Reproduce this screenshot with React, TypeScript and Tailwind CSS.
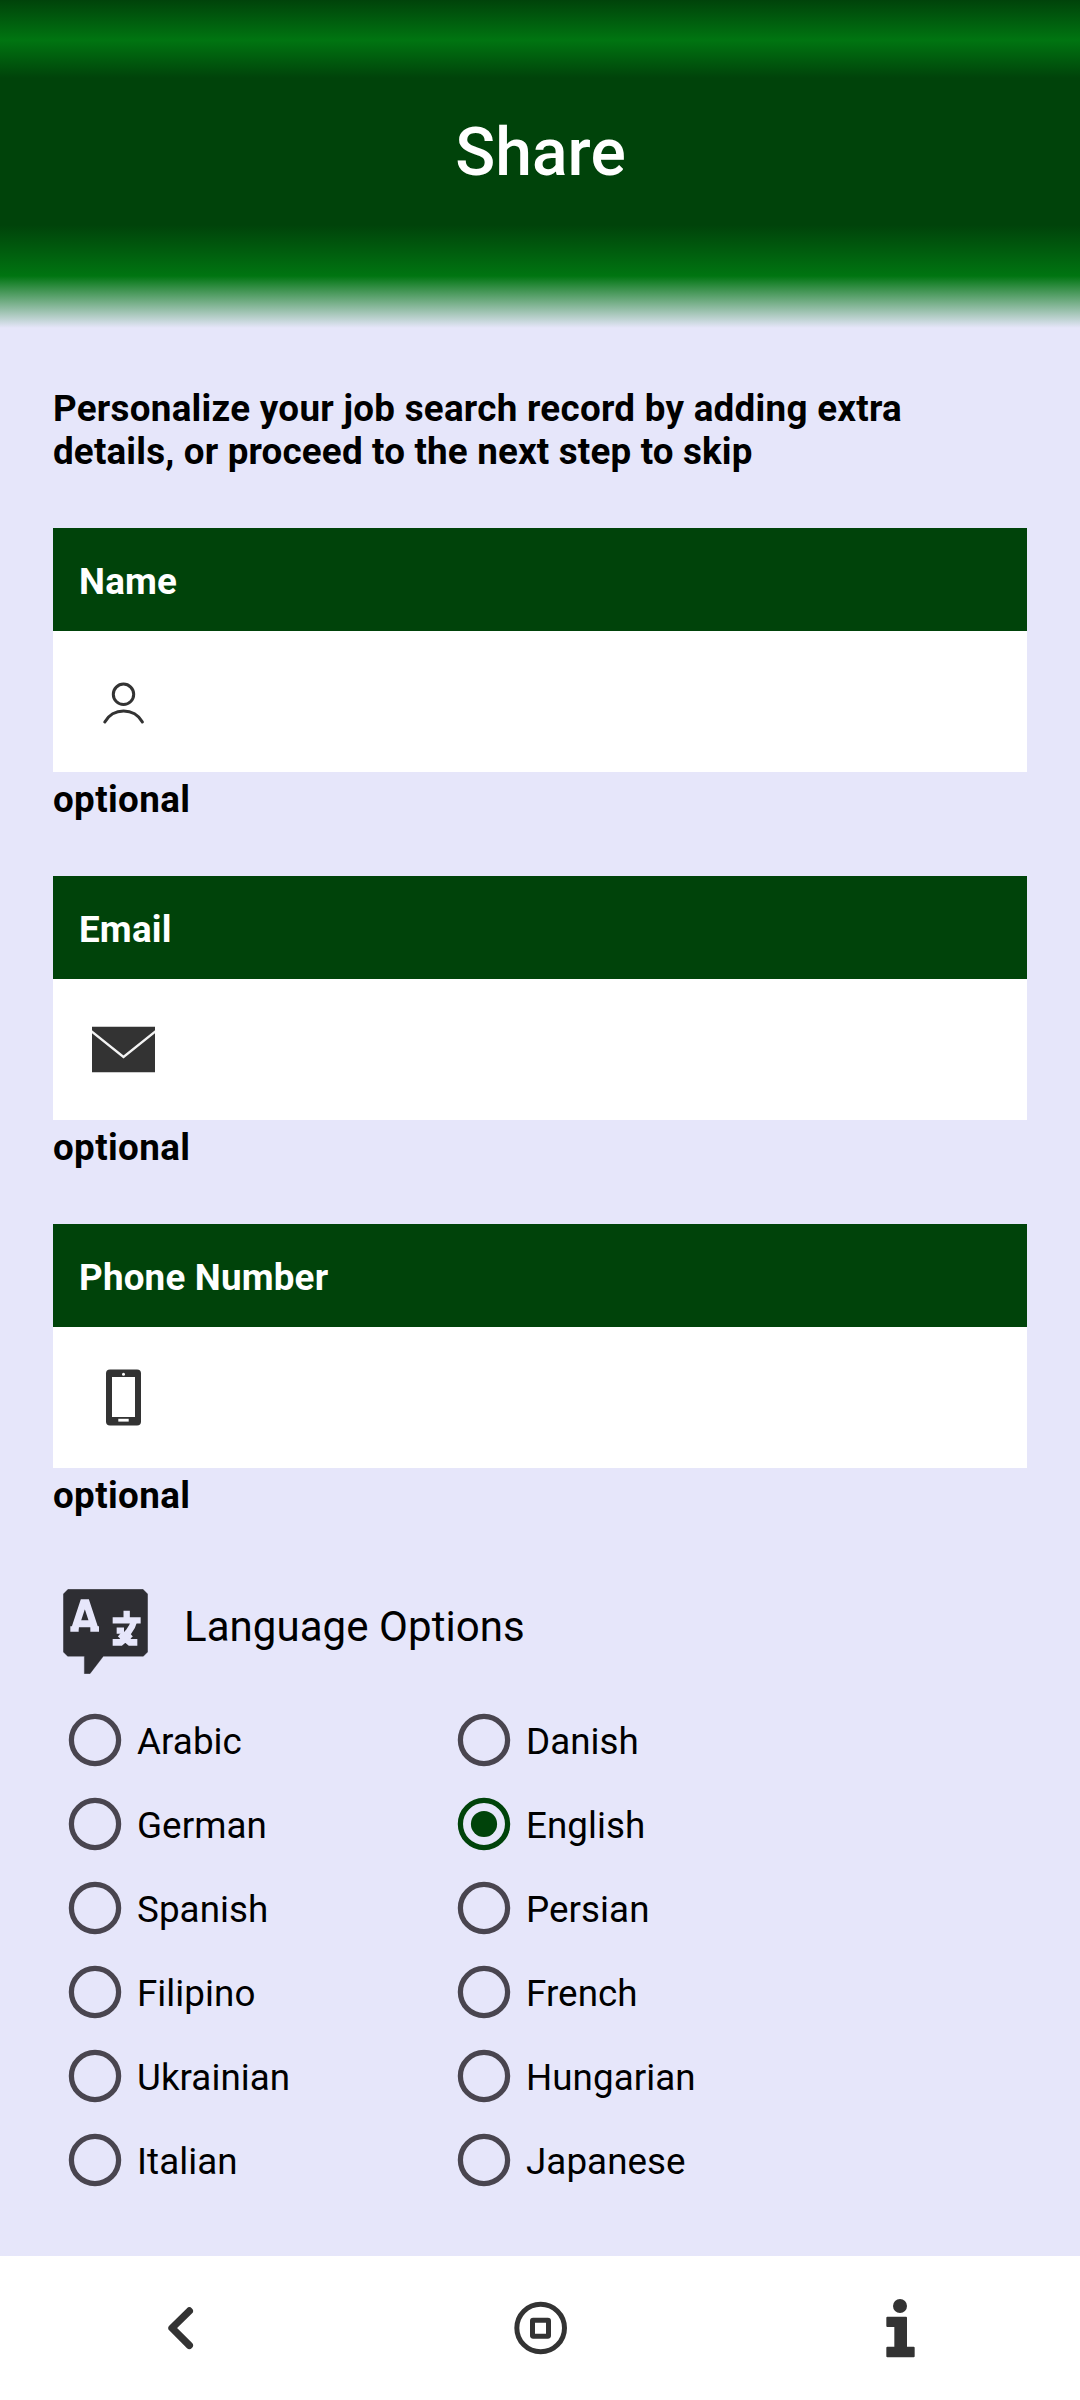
import { useState } from "react";
import type { ReactNode } from "react";

const PersonIcon = () => (
  <svg className="size-[63px]" viewBox="0 0 63 63" fill="none" stroke="#333" strokeWidth="3" strokeLinecap="round">
    <circle cx="31.5" cy="24.3" r="10.2" />
    <path d="M12.8 52A21.5 21.5 0 0 1 50.4 52" />
  </svg>
);

const MailIcon = () => (
  <svg className="size-[63px]" viewBox="0 0 63 63" fill="none">
    <path d="M0 8.7H63V54.3H0Z" fill="#333" />
    <path d="M-1 13L31.5 39L64 13" stroke="#f4f4f4" strokeWidth="2.4" />
  </svg>
);

const PhoneIcon = () => (
  <svg className="size-[63px]" viewBox="0 0 63 63">
    <rect x="14" y="3.5" width="35" height="56" rx="4" fill="#333" />
    <rect x="20" y="11" width="23" height="40" fill="#fff" />
    <circle cx="31.5" cy="8.2" r="1.5" fill="#fff" />
    <rect x="26.3" y="52.8" width="10.4" height="2.8" fill="#fff" />
  </svg>
);

const TranslateIcon = () => (
  <svg className="h-[85px] w-[85px] blur-[0.7px]" viewBox="69 87 255 255" fill="none">
    <path d="M84 88H309L323 102V276L310 289H190L150 341H133V289H83L70 276V102Z" fill="#2e2e33" stroke="#2e2e33" strokeLinejoin="round" />
    <g stroke="#e6e6fa" strokeWidth="19">
      <path d="M91 207H116M151 207H177" strokeWidth="16" />
      <path d="M103 210L130 128H139L166 210M113 191H156" strokeWidth="21" />
      <path d="M260 152V178M218 181H302" />
      <path d="M282 184C276 208 258 226 248 232M230 212H252" strokeWidth="19" />
      <path d="M218 247H242L272 222M240 222L270 247H292" strokeWidth="20" />
    </g>
  </svg>
);

const BackIcon = () => (
  <svg className="size-[100px]" viewBox="0 115 300 300" fill="none" stroke="#333" strokeWidth="22" strokeLinecap="round" strokeLinejoin="round">
    <path d="M178 214L126 265L178 317" />
  </svg>
);

const HomeIcon = () => (
  <svg className="size-[100px]" viewBox="0 115 300 300" fill="none" stroke="#333" strokeWidth="15">
    <circle cx="152" cy="265" r="71.5" />
    <rect x="127.5" y="241.5" width="48" height="48" rx="2" />
  </svg>
);

const InfoIcon = () => (
  <svg className="size-[100px]" viewBox="0 115 300 300" fill="#333">
    <circle cx="150" cy="199" r="21" />
    <path d="M112 231H168Q171 231 171 234V321H191Q194 321 194 324V350Q194 353 191 353H112Q109 353 109 350V324Q109 321 112 321H133V262H112Q109 262 109 259V234Q109 231 112 231Z" />
  </svg>
);

const Field = ({ label, icon }: { label: string; icon: ReactNode }) => (
  <section className="h-[348px] font-bold tracking-[0.28px]">
    <div className="flex h-[103px] items-center bg-[#00430a] pl-[26px] pt-[3px] tracking-[0.2px] text-white">{label}</div>
    <div className="flex h-[141px] items-center bg-white pl-[39px]">{icon}</div>
    <p className="pt-[6px] tracking-[0.38px]">optional</p>
  </section>
);

const languages = [
  "Arabic", "Danish", "German", "English", "Spanish", "Persian",
  "Filipino", "French", "Ukrainian", "Hungarian", "Italian", "Japanese",
];

export default function App() {
  const [selected, setSelected] = useState("English");
  return (
    <div className="flex h-[2400px] w-[1080px] flex-col overflow-hidden bg-[#e6e6fa] font-['Roboto',sans-serif] text-[36.75px] leading-[43px] tracking-[0.06px] text-black">
      <header className="flex h-[328px] shrink-0 justify-center bg-[linear-gradient(to_bottom,#00430a_0px,#007511_40px,#00430a_78px,#00430a_225px,#007511_276px,#e6e6fa_328px)] pt-[114px]">
        <h1 className="pl-px text-[66px] font-medium leading-[77px] text-white">Share</h1>
      </header>
      <main className="flex-1 px-[53px] pt-[59px]">
        <p className="h-[141px] font-bold tracking-[0.28px]">
          Personalize your job search record by adding extra<br />
          <span className="tracking-[0.18px]">details, or proceed to the next step to skip</span>
        </p>
        <Field label="Name" icon={<PersonIcon />} />
        <Field label="Email" icon={<MailIcon />} />
        <Field label="Phone Number" icon={<PhoneIcon />} />
        <div className="flex h-[126px] pl-[10px] pt-[17px]">
          <TranslateIcon />
          <h2 className="ml-[36px] mt-[13px] text-[42px] leading-[49px]">Language Options</h2>
        </div>
        <div className="grid grid-cols-[389px_389px]" role="radiogroup">
          {languages.map((name) => (
            <button
              key={name}
              role="radio"
              aria-checked={selected === name}
              onClick={() => setSelected(name)}
              className="flex h-[84px] items-center pl-[15px] text-left"
            >
              <svg className={selected === name ? "size-[54px] text-[#00430a]" : "size-[54px] text-[#49454f]"} viewBox="0 0 54 54" fill="none">
                <circle cx="27" cy="27" r="23.6" stroke="currentColor" strokeWidth="5.25" />
                {selected === name && <circle cx="27" cy="27" r="13.1" fill="currentColor" />}
              </svg>
              <span className="ml-[15px] mt-[3px]">{name}</span>
            </button>
          ))}
        </div>
      </main>
      <nav className="grid h-[144px] shrink-0 grid-cols-3 place-items-center bg-white">
        <button aria-label="Back"><BackIcon /></button>
        <button aria-label="Home"><HomeIcon /></button>
        <button aria-label="Information"><InfoIcon /></button>
      </nav>
    </div>
  );
}
